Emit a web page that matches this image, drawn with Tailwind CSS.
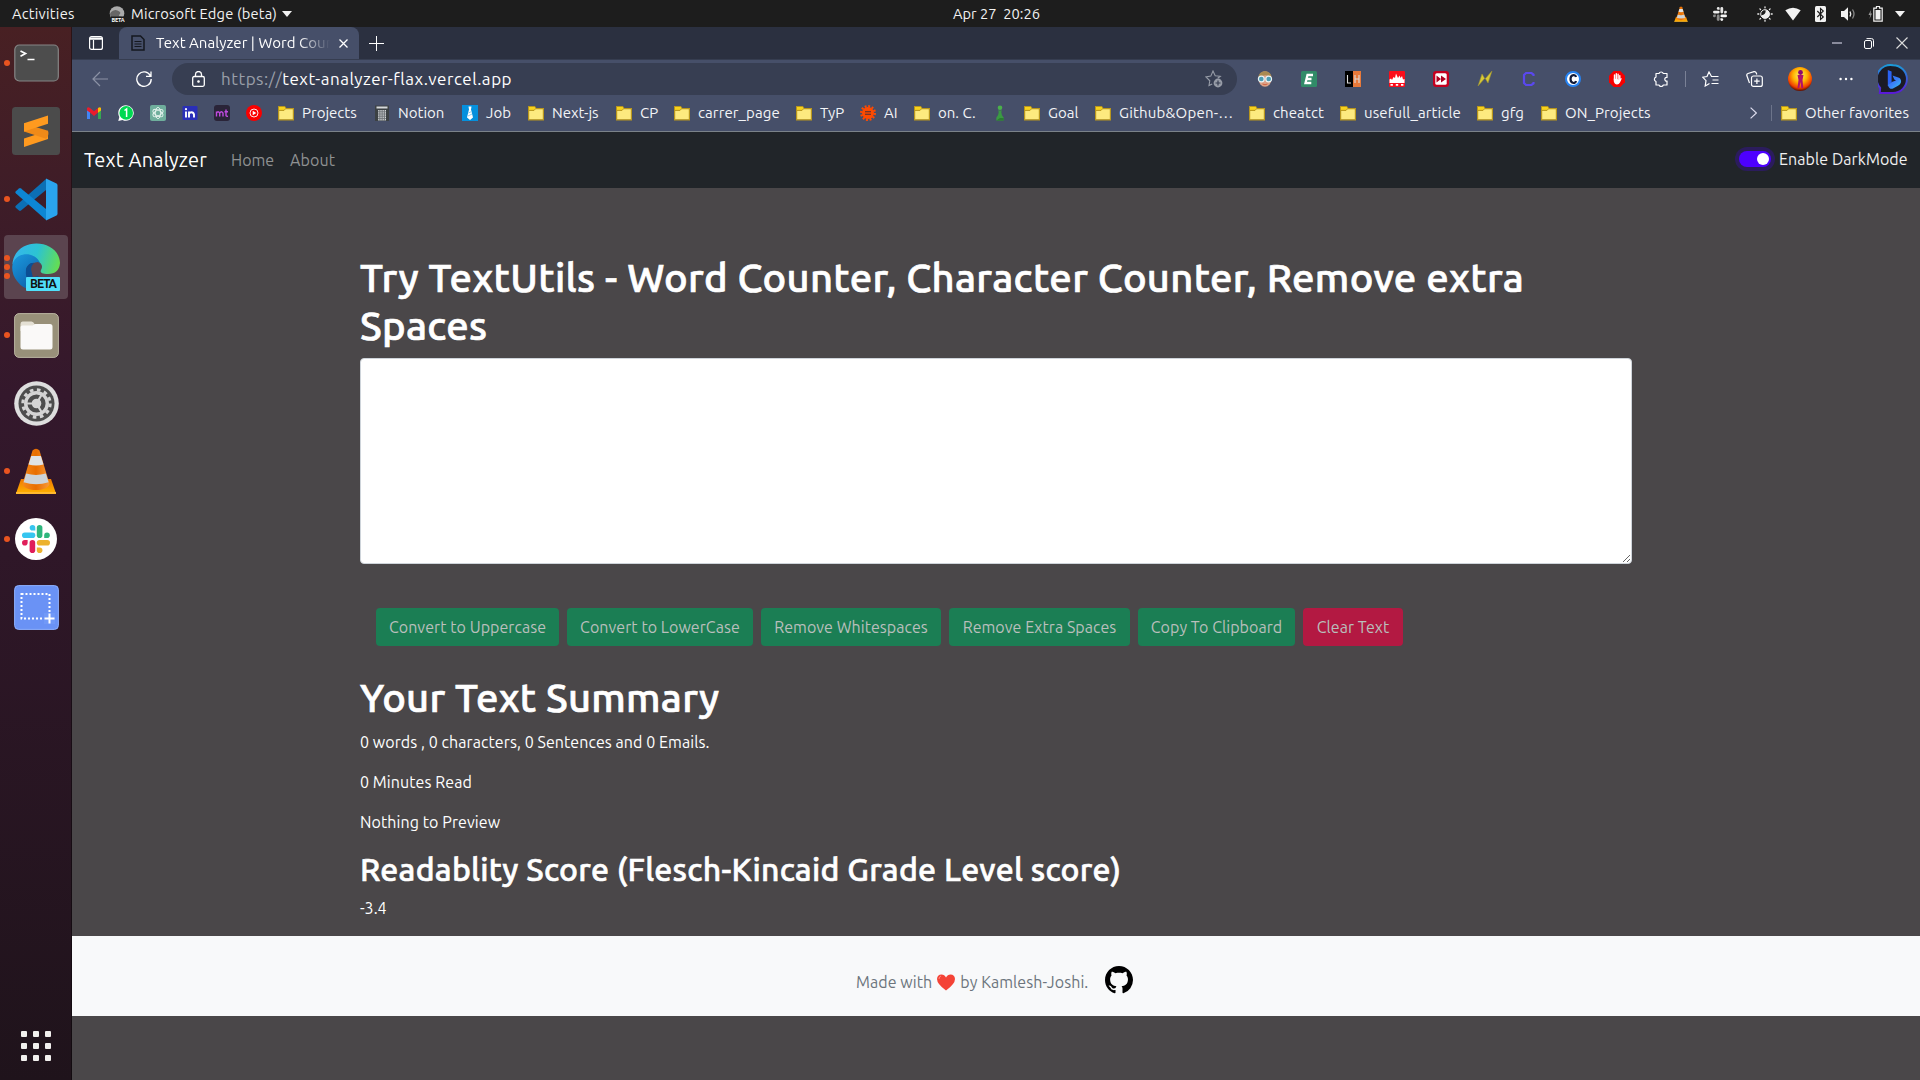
<!DOCTYPE html>
<html lang="en">
<head>
<meta charset="utf-8">
<title>Text Analyzer | Word Counter</title>
<script src="https://cdn.jsdelivr.net/npm/@tailwindcss/browser@4"></script>
</head>
<body class="w-[1920px] h-[1080px] overflow-hidden flex flex-col bg-[#4a4749] font-[Ubuntu,'Noto_Sans',sans-serif] text-white">

<!-- shared symbols -->
<svg class="absolute size-0">
  <defs>
    <linearGradient id="edgeTop" x1="0" y1="0.3" x2="1" y2="0.5"><stop offset="0" stop-color="#36b5ee"/><stop offset=".5" stop-color="#2cc3d2"/><stop offset="1" stop-color="#63dd55"/></linearGradient>
    <linearGradient id="edgeLow" x1="0" y1="0" x2=".8" y2="1"><stop offset="0" stop-color="#1b9ade"/><stop offset="1" stop-color="#0c59a4"/></linearGradient>
    <linearGradient id="cone" x1="0" y1="0" x2="1" y2="0"><stop offset="0" stop-color="#f58a1c"/><stop offset=".5" stop-color="#e86e00"/><stop offset="1" stop-color="#f79a3a"/></linearGradient>
    <linearGradient id="base" x1="0" y1="0" x2="0" y2="1"><stop offset="0" stop-color="#f07800"/><stop offset="1" stop-color="#ffb300"/></linearGradient>
    <linearGradient id="bingRing" x1="0" y1="0" x2="0" y2="1"><stop offset="0" stop-color="#1a9bd8"/><stop offset="1" stop-color="#5a18d8"/></linearGradient>
    <linearGradient id="bingB" x1="0" y1="0" x2="1" y2="1"><stop offset="0" stop-color="#2a6bf5"/><stop offset=".5" stop-color="#3a7ef8"/><stop offset="1" stop-color="#38c8f0"/></linearGradient>
    <radialGradient id="sun" cx=".5" cy=".35" r=".65"><stop offset="0" stop-color="#fff36a"/><stop offset=".45" stop-color="#ffb400"/><stop offset=".8" stop-color="#f04000"/><stop offset="1" stop-color="#5a0d00"/></radialGradient>
  </defs>
  <symbol id="folder" viewBox="0 0 16 16"><path d="M.6 1.6h6l1.4 2h7.4v11.2H.6z" fill="#fdea7f" stroke="#b8961e" stroke-width="1.2"/><path d="M1 2h5.4l1 1.6-1.2 1.8H1z" fill="#f7d21c"/><path d="M1 5.4h5L7.6 3.8" fill="none" stroke="#b8961e"/></symbol>
  <symbol id="vlc" viewBox="0 0 42 46"><path d="M6 31h30l5 14.5H1z" fill="url(#base)"/><path d="M1 44h40v2H1z" fill="#ffb92e"/><path d="M7.500 36C10 44 32 44 34.500 36L24.500 2.500Q21-1 17.500 2.500z" fill="url(#cone)"/><path d="M16.200 8h9.700l2.600 8.500q-7.500 2-15 0z" fill="#dfe3e6"/><path d="M11.200 25.500q9.800 2.800 19.600 0l2.800 8.700q-12.500 4-25 0z" fill="#cdd3d7"/></symbol>
  <symbol id="slack" viewBox="0 0 28 28"><g fill="#36c5f0"><path d="M10.500 0a2.800 2.800 0 0 1 2.800 2.800v2.800h-2.800a2.800 2.800 0 0 1 0-5.600z"/><rect x="0" y="7.400" width="13.300" height="5.600" rx="2.800"/></g><g fill="#2eb67d"><rect x="14.800" y="0" width="5.600" height="13" rx="2.800"/><path d="M22.200 13V10.200a2.800 2.800 0 1 1 2.800 2.800z"/></g><g fill="#ecb22e"><rect x="14.800" y="15" width="13.200" height="5.600" rx="2.800"/><path d="M14.800 22.400h2.800a2.800 2.800 0 1 1-2.800 2.800z"/></g><g fill="#e01e5a"><rect x="7.600" y="15" width="5.600" height="13" rx="2.800"/><path d="M5.600 15v2.800A2.800 2.800 0 1 1 2.800 15z"/></g></symbol>
</svg>

<!-- system top bar -->
<header class="h-[27px] shrink-0 bg-[#1d1d1d] text-[14.67px] leading-[27px] text-[#f2f2f2] grid grid-cols-[1fr_auto_1fr] items-center">
  <div class="flex items-center pl-3">
    <span class="w-[97px] tracking-[.25px]">Activities</span>
    <svg class="w-4 h-4 mr-[6px]" viewBox="0 0 16 16"><circle cx="8" cy="7.500" r="7.300" fill="#aaa"/><path d="M1 8a6 6 0 0 1 10-2c1 2-1 2-1 4l4 1V16H3z" fill="#666"/><rect x="2" y="10.500" width="14" height="5.500" fill="#1d1d1d"/><text x="2.500" y="15.600" font-size="5.500" font-weight="700" fill="#fff" textLength="13">BETA</text></svg>
    <span class="w-[151px] tracking-[.17px]">Microsoft Edge (beta)</span>
    <svg class="w-[10px] h-[6px]" viewBox="0 0 10 6"><path d="M0 0h10L5 6z" fill="#f2f2f2"/></svg>
  </div>
  <div class="w-[88px] mr-[-74px] whitespace-pre">Apr 27  20:26</div>
  <div class="flex items-center justify-end pr-[15px]">
    <svg class="w-[14px] h-4 mr-[25px]"><use href="#vlc"/></svg>
    <svg class="w-[14px] h-[14px] mr-[30px] grayscale brightness-[3]"><use href="#slack"/></svg>
    <svg class="w-4 h-4 mr-[12px]" viewBox="0 0 16 16"><g stroke="#eee" stroke-width="1.300" stroke-linecap="round"><path d="M8 .8v1M8 14.200v1M.8 8h1M14.200 8h1M2.900 2.900l.7.7M12.400 12.400l.7.7M2.900 13.100l.7-.7M12.400 3.600l.7-.7"/></g><circle cx="8" cy="8" r="4.300" fill="none" stroke="#eee"/><path d="M8.500 4a4.300 4.300 0 1 1-4.300 5.200A4 4 0 0 0 8.500 4z" fill="#eee"/></svg>
    <svg class="w-4 h-4 mr-[14px]" viewBox="0 0 16 16"><path d="M.3 4.300Q8-1 15.700 4.300L8 14.500z" fill="#f2f2f2"/></svg>
    <svg class="w-[11px] h-4 mr-[15px]" viewBox="0 0 11 16"><rect width="11" height="16" rx="1.500" fill="#f2f2f2"/><path d="M2.300 5l6 6-2.800 2.500v-11L8.300 5l-6 6" fill="none" stroke="#1d1d1d" stroke-width="1.100"/></svg>
    <svg class="w-[15px] h-4 mr-[12px]" viewBox="0 0 15 16"><path d="M0 5h3l4-3.800v13.600L3 11H0z" fill="#f2f2f2"/><path d="M9 5.500q1.500 2.500 0 5" stroke="#eee" stroke-width="1.400" fill="none"/><path d="M11.500 3.500q3 4.500 0 9" stroke="#888" stroke-width="1.300" fill="none"/></svg>
    <svg class="w-[15px] h-4 mr-[12px]" viewBox="0 0 15 16"><path d="M3 4L.5 9h1.800L1.500 13 4 7.500H2.500z" fill="#999"/><path d="M8.500.5h3v1.700h2.700v13H5.800v-13h2.700z" fill="none" stroke="#f2f2f2" stroke-width="1.200"/><rect x="7.500" y="4" width="5" height="9.500" fill="#f2f2f2"/></svg>
    <svg class="w-[10px] h-[6px]" viewBox="0 0 10 6"><path d="M0 0h10L5 6z" fill="#f2f2f2"/></svg>
  </div>
</header>

<div class="flex flex-1 min-h-0">
  <!-- dock -->
  <aside class="w-[72px] shrink-0 bg-linear-to-b from-[#482023] via-[#34182c] via-35% to-[#1f131b] flex flex-col items-center gap-1 pt-1 shadow-[inset_-1px_0_0_rgba(0,0,0,0.4)]">
    <div class="relative w-16 h-16 grid place-items-center">
      <i class="absolute left-0 top-[29px] size-[6px] rounded-full bg-[#e95420]"></i>
      <svg class="w-[45px] h-[38px]" viewBox="0 0 45 38"><rect x=".8" y="1" width="43.500" height="36" rx="4.500" fill="#4d4d4d" stroke="#858585" stroke-width="1.200"/><path d="M6.500 7l5 2.600-5 2.600M13.500 15.500h7" fill="none" stroke="#fff" stroke-width="1.700"/></svg>
    </div>
    <div class="w-16 h-16 grid place-items-center">
      <svg class="size-12" viewBox="0 0 48 48"><rect width="48" height="48" rx="3.500" fill="#4b4b4b"/><path d="M12 31.500l24-7.700v8.200L12 40z" fill="#ff9a1f"/><path d="M12 16.500l24 7.300q1.500 5-2 8L12 24.500z" fill="#f08a18"/><path d="M12 16.200L36 8.500v8.200L12 24.600z" fill="#ff9a1f"/></svg>
    </div>
    <div class="relative w-16 h-16 grid place-items-center">
      <i class="absolute left-0 top-[29px] size-[6px] rounded-full bg-[#e95420]"></i>
      <svg class="w-[43px] h-[43px]" viewBox="0 0 43 43"><path d="M31 1v11L6 32.500q-1 .8-2 0L.8 29.800q-1-1 0-2z" fill="#0c6fb5"/><path d="M31 42V31L6 10.500q-1-.8-2 0L.8 13.200q-1 1 0 2z" fill="#0d86d4"/><path d="M31 .5l10.500 5q1 .6 1 2v28q0 1.400-1 2l-10.500 5z" fill="#2aa4ee"/></svg>
    </div>
    <div class="relative w-16 h-16 grid place-items-center rounded bg-[#5b444f]">
      <i class="absolute left-0 top-[20px] size-[6px] rounded-full bg-[#e95420]"></i>
      <i class="absolute left-0 top-[29px] size-[6px] rounded-full bg-[#e95420]"></i>
      <i class="absolute left-0 top-[38px] size-[6px] rounded-full bg-[#e95420]"></i>
      <svg class="size-12" viewBox="0 0 48 48"><path d="M.4 21C3-7 47-5 48 20q-1 11-12 11c-7 0-8-2-7-4 3-5-1-9-7-9Q8 15 .4 21z" fill="url(#edgeTop)"/><path d="M.2 24C1 10 20 7 27 18q2 3 1 6c-2-5-9-6-13 0-4 9 4 18 18 19Q15 52 5 38 0 32 .2 24z" fill="url(#edgeLow)"/><path d="M14 26c3-8 9-7 13-3-5 0-5 8 1 12l3 10Q12 44 14 26z" fill="#0b4f94"/><path d="M19 26q1-7 7-7 4 2 3 6-2 4 0 6l-8 4z" fill="#5b444f"/><rect x="14" y="34" width="34" height="14" rx="1" fill="#50e0fb"/><text x="18" y="45.200" font-size="12" font-weight="700" textLength="27" fill="#111">BETA</text></svg>
    </div>
    <div class="relative w-16 h-16 grid place-items-center">
      <i class="absolute left-0 top-[29px] size-[6px] rounded-full bg-[#e95420]"></i>
      <svg class="size-[45px]" viewBox="0 0 45 45"><rect x=".6" y=".6" width="43.800" height="43.800" rx="4.500" fill="#989079" stroke="#b9b3a0"/><path d="M6.500 11q0-2.500 2-2.500h9q2 0 3 2.500h14L33 18H6.500z" fill="#e4e0d4"/><path d="M6.500 14q0-1.500 2-1.500h10l3-1.500h14.500q2.500 0 2.500 2.500V34q0 2.500-2.500 2.500H9q-2.500 0-2.500-2.500z" fill="#faf9f8"/></svg>
    </div>
    <div class="w-16 h-16 grid place-items-center">
      <svg class="size-[45px]" viewBox="0 0 45 45"><circle cx="22.500" cy="22.500" r="22.300" fill="#dedede"/><circle cx="22.500" cy="22.500" r="18" fill="#4d4d4d"/><circle cx="22.500" cy="22.500" r="13.700" fill="none" stroke="#d4d4d4" stroke-width="3" stroke-dasharray="3.600 3.573"/><circle cx="22.500" cy="22.500" r="10.800" fill="none" stroke="#d4d4d4" stroke-width="3.400"/><circle cx="22.500" cy="22.500" r="4.800" fill="#d4d4d4"/><path d="M22.500 22.500L13 22.500M22.500 22.500l5-8.500M22.500 22.500l5 8.500" stroke="#d4d4d4" stroke-width="2.200"/></svg>
    </div>
    <div class="relative w-16 h-16 grid place-items-center">
      <i class="absolute left-0 top-[29px] size-[6px] rounded-full bg-[#e95420]"></i>
      <svg class="w-[42px] h-[46px]"><use href="#vlc"/></svg>
    </div>
    <div class="relative w-16 h-16 grid place-items-center">
      <i class="absolute left-0 top-[29px] size-[6px] rounded-full bg-[#e95420]"></i>
      <span class="size-[42px] rounded-full bg-white grid place-items-center"><svg class="size-7"><use href="#slack"/></svg></span>
    </div>
    <div class="w-16 h-16 grid place-items-center">
      <svg class="size-[45px]" viewBox="0 0 45 45"><rect x=".6" y=".6" width="43.800" height="43.800" rx="4" fill="#6a92f5" stroke="#8db0ff"/><rect x="7.500" y="9" width="28" height="24.500" fill="none" stroke="#fff" stroke-width="2" stroke-dasharray="2 2"/><rect x="30" y="28" width="11" height="11" fill="#7199f7"/><path d="M35.500 28.500v10M30.500 33.500h10" stroke="#fff" stroke-width="2"/></svg>
    </div>
    <svg class="size-[30px] mt-auto mb-[19px]" viewBox="0 0 30 30" fill="#f2f0ee"><rect width="6" height="6" rx="1"/><rect x="12" width="6" height="6" rx="1"/><rect x="24" width="6" height="6" rx="1"/><rect y="12" width="6" height="6" rx="1"/><rect x="12" y="12" width="6" height="6" rx="1"/><rect x="24" y="12" width="6" height="6" rx="1"/><rect y="24" width="6" height="6" rx="1"/><rect x="12" y="24" width="6" height="6" rx="1"/><rect x="24" y="24" width="6" height="6" rx="1"/></svg>
  </aside>

  <div class="flex-1 min-w-0 flex flex-col">
    <!-- tab strip -->
    <div class="h-8 shrink-0 bg-[#2b3040] flex items-center">
      <svg class="w-[14px] h-[14px] ml-[17px] mr-4" viewBox="0 0 14 14" fill="none" stroke="#fff" stroke-width="1.200"><rect x=".6" y=".6" width="12.800" height="12.800" rx="2"/><path d="M1 2h12M1 3.200h12M4.500 4v9"/></svg>
      <div class="w-60 h-8 rounded-t-lg bg-[#464f69] flex items-center pl-3">
        <svg class="w-[14px] h-4 mr-[11px]" viewBox="0 0 14 16" fill="none" stroke="#15181f" stroke-width="1.500"><path d="M1 1h8.500L13 4.500V15H1z"/><path d="M3.500 6.500h7M3.500 9h7M3.500 11.500h7" stroke-width="1.100"/></svg>
        <span class="w-[174px] overflow-hidden whitespace-nowrap text-[15px] leading-8 tracking-[.05px] mask-r-from-82% mask-r-to-100%">Text Analyzer | Word Counter</span>
        <svg class="w-[9px] h-[9px] ml-[9px]" viewBox="0 0 9 9" stroke="#fff" stroke-width="1.300"><path d="M.5.500l8 8M8.500.5l-8 8"/></svg>
      </div>
      <svg class="size-[15px] ml-[10px]" viewBox="0 0 15 15" stroke="#fff" stroke-width="1"><path d="M7.500 0v15M0 7.500h15"/></svg>
      <div class="ml-auto flex items-center pr-3">
        <svg class="w-[10px] h-3 mr-[22px]" viewBox="0 0 10 12"><path d="M0 6h10" stroke="#aab" stroke-width="1.500"/></svg>
        <svg class="w-[10px] h-[11px] mr-[22px]" viewBox="0 0 10 11" fill="none" stroke="#fff"><rect x=".5" y="2.500" width="7" height="8" rx="1.500"/><path d="M2.500.6h5q2 0 2 2v6"/></svg>
        <svg class="size-3" viewBox="0 0 12 12" stroke="#ddd" stroke-width="1.100"><path d="M.5.500l11 11M11.500.5l-11 11"/></svg>
      </div>
    </div>

    <!-- address bar -->
    <div class="h-10 shrink-0 bg-[#464f69] shadow-[inset_0_1px_0_#363d50] flex items-center pl-5 pr-3">
      <svg class="w-4 h-4 mr-7 shrink-0" viewBox="0 0 16 16" fill="none" stroke="#8b92a5" stroke-width="1.200"><path d="M16 8H1M8 1L1 8l7 7"/></svg>
      <svg class="w-4 h-4 mr-5 shrink-0" viewBox="0 0 16 16" fill="none" stroke="#fff" stroke-width="1.300"><path d="M14.500 5A7.200 7.200 0 1 0 15.200 8M15 .5V5.300H10"/></svg>
      <div class="w-[1065px] shrink-0 h-8 rounded-full bg-[#373e52] flex items-center pl-5 pr-[14px]">
        <svg class="w-[13px] h-4 mr-4" viewBox="0 0 13 16" fill="none" stroke="#fff" stroke-width="1.300"><rect x=".7" y="5.500" width="11.600" height="9.800" rx="1.500"/><path d="M3.500 5.500V3.500a3 3 0 0 1 6 0v2"/><circle cx="6.500" cy="10.500" r=".7" fill="#fff"/></svg>
        <span class="text-[17px] tracking-[.52px] leading-8"><span class="text-[#9a9fa9]">https://</span>text-analyzer-flax.vercel.app</span>
        <svg class="w-[18px] h-[18px] ml-auto" viewBox="0 0 18 18"><path d="M12.700 8.300l2.600-2-5.100-.6L8 1 5.800 6.100 1 6.900l3.800 3.900-.8 4.700 3.200-1.600" fill="none" stroke="#979ca7" stroke-width="1.100"/><circle cx="13" cy="13" r="4.400" fill="#979ca7"/><path d="M13 10.500v5M10.500 13h5" stroke="#373e52" stroke-width="1.200"/></svg>
      </div>
      <!-- extensions -->
      <div class="ml-5 flex shrink-0 items-center gap-7">
        <svg class="size-4" viewBox="0 0 16 16"><ellipse cx="8" cy="8" rx="6.500" ry="7.700" fill="#dba389"/><path d="M1.500 7C1 -2 15 -2 14.500 7 11 3 5 4 1.500 7z" fill="#a88a52"/><circle cx="4.300" cy="8" r="2.900" fill="#4a9cb3" stroke="#e8f2f5" stroke-width="1.200"/><circle cx="11.700" cy="8" r="2.900" fill="#4a9cb3" stroke="#e8f2f5" stroke-width="1.200"/><path d="M5.500 13q2.500 1.500 5 0" stroke="#d0603e" fill="none"/></svg>
        <svg class="size-4" viewBox="0 0 16 16"><rect width="16" height="16" rx="1.500" fill="#318b68"/><path d="M12 4H6.500L4.500 12h5.800M5.500 8h5" fill="none" stroke="#fff" stroke-width="2.300"/></svg>
        <svg class="size-4" viewBox="0 0 16 16"><rect width="9" height="16" fill="#000"/><rect x="8" width="8" height="16" fill="#e8793a"/><path d="M2.500 4v8h3.500M10 4v8M14 4v8M10 8h4" fill="none" stroke="#ddd" stroke-width="1.100"/></svg>
        <svg class="size-4" viewBox="0 0 16 16"><rect width="16" height="16" rx="1" fill="#fb0d1b"/><path d="M.5 11V8.500L2 7.500l1 1.500 1.500-3L6 7l1-4.500L9 7l1.500-2.500 1 2.500L13 5l1 3.500 1.500-.5v3z" fill="#fff"/><path d="M.5 11v1h15v-1z" fill="#fff"/><path d="M1.500 13.800h2.400M6.800 13.800h2.400M12 13.800h2.400" stroke="#fff" stroke-width="1.700"/></svg>
        <svg class="size-4" viewBox="0 0 16 16"><rect width="16" height="16" rx="3" fill="#c4001f"/><rect x="2.300" y="2.300" width="11.400" height="11.400" rx="1.500" fill="#fff"/><path d="M3.500 4.500L8 8l-4.500 3.500zM8 4.500L13 8l-5 3.500z" fill="#b00020"/></svg>
        <svg class="size-4" viewBox="0 0 16 16"><path d="M1 15L5 3l3 5 7-8-4 12-3-5z" fill="#d9c934" stroke="#9b9136" stroke-width=".6"/></svg>
        <svg class="size-4" viewBox="0 0 16 16"><path d="M12.500 5V3.500L10.500 2H5L3 4v8l2 2h5.500l2-1.500V11" fill="none" stroke="#5a48ee" stroke-width="2.200"/></svg>
        <svg class="size-4" viewBox="0 0 16 16"><circle cx="8" cy="8" r="7" fill="#fff" stroke="#2684f5" stroke-width="2"/><path d="M11 6Q10.500 4 8.500 4 5.500 4.500 5.500 8t3 4Q10.500 12 11 10" fill="none" stroke="#111a38" stroke-width="2.200"/></svg>
        <svg class="size-4" viewBox="0 0 16 16"><path d="M4.700 0h6.600L16 4.700v6.600L11.300 16H4.700L0 11.300V4.700z" fill="#f70000"/><path d="M5.500 9V4M7.300 8V2.800M9.100 8V3.200M10.800 9V4.600" stroke="#fff" stroke-width="1.400" stroke-linecap="round"/><path d="M4.800 7.500v3q.8 3 3.200 3 2 0 3-2l1.800-4-1-.4-1 1.400z" fill="#fff"/></svg>
        <svg class="size-4" viewBox="0 0 16 16"><path d="M3 2.500h3a2.300 2.300 0 0 1 4.300 0H14v4a1.800 1.800 0 1 0 0 3.500v4h-3.700a2.300 2.300 0 0 1-4.300 0H3V10.500a2.300 2.300 0 0 1 0-4.400z" fill="none" stroke="#fff" stroke-width="1.200" stroke-linejoin="round"/></svg>
      </div>
      <span class="w-px h-4 bg-[#7a8196] ml-4 mr-4 shrink-0"></span>
      <svg class="w-[17px] h-4 shrink-0" viewBox="0 0 17 16" fill="none" stroke="#fff" stroke-width="1.200"><path d="M9 5.500H14M16.500 5.500H9.500L7 1 5 5.500.7 6.200 4 9.600 3.200 15 7.500 12.500M10.500 9h6M9.500 12.500h7"/></svg>
      <svg class="w-[17px] h-4 ml-[27px] shrink-0" viewBox="0 0 17 16" fill="none" stroke="#fff" stroke-width="1.200"><rect x="5.500" y="5" width="10.800" height="10.400" rx="2"/><path d="M10.900 7.500v5.500M8.200 10.200h5.500M3.500 12L.8 4.500Q.5 3 2 2.500L8 .7q1.700-.3 2.300 1.300l.5 1.500"/></svg>
      <svg class="size-6 ml-[25px] shrink-0" viewBox="0 0 24 24"><circle cx="12" cy="12" r="12" fill="url(#sun)"/><circle cx="12.500" cy="5.500" r="2.400" fill="#8a0a70"/><path d="M9.500 8h6l-1 5 .8 8h-2l-.8-6-1.200 6H9.500l1-8z" fill="#b0126a"/></svg>
      <svg class="w-[14px] h-1 ml-[27px] shrink-0" viewBox="0 0 14 4" fill="#fff"><circle cx="1.600" cy="2" r="1.200"/><circle cx="7" cy="2" r="1.200"/><circle cx="12.400" cy="2" r="1.200"/></svg>
      <svg class="w-[30px] h-[31px] ml-auto shrink-0" viewBox="0 0 30 31"><path d="M15 1.200A13.800 13.800 0 1 1 15 29H1.800l.4-5A13.800 13.800 0 0 1 15 1.200z" fill="#1b1b25" stroke="url(#bingRing)" stroke-width="1.900"/><path d="M9.800 6l3.800 1.500v10.500l-3.800 4z" fill="#2a62f2"/><path d="M9.800 21l4-3 4.200-1.500-1.700-.9-1.800-4.200 6.500 2.300q2.500 1.500 2 4.500-.5 2-3 3.600l-5 2.800q-3.500 1.300-5.200-3.600z" fill="url(#bingB)"/></svg>
    </div>

    <!-- favourites bar -->
    <div class="h-[33px] shrink-0 bg-[#464f69] border-b border-[#7b8289] flex items-center pl-[14px] pr-[11px] pb-1 text-[15px] leading-7 text-[#f3f4f7] whitespace-nowrap">
      <div class="flex items-center gap-4 mr-4">
        <svg class="size-4" viewBox="0 0 16 16"><path d="M1 3.500V14h3V7z" fill="#4285f4"/><path d="M12 7v7h3V3.500z" fill="#34a853"/><path d="M1 3q1-1.500 3 0l4 3.200L12 3v4.500L8 11 4 7.500 1 5.500z" fill="#ea1c2c"/><path d="M12 3q2-1.500 3 0v2.500l-3 2.300z" fill="#fbbc04"/></svg>
        <svg class="size-4" viewBox="0 0 16 16"><path d="M8 .2A7.800 7.800 0 1 1 4.500 15L.3 15.900l1-4A7.800 7.800 0 0 1 8 .2z" fill="#fff"/><circle cx="8.200" cy="7.900" r="6.800" fill="#00d951"/><path d="M6.500 5.500L8.600 4v8" fill="none" stroke="#fff" stroke-width="1.500"/></svg>
        <svg class="size-4" viewBox="0 0 16 16"><rect width="16" height="16" rx="2" fill="#6fae9c"/><g fill="none" stroke="#e8f5f0" stroke-width=".9"><ellipse cx="8" cy="8" rx="2.700" ry="5.600"/><ellipse cx="8" cy="8" rx="2.700" ry="5.600" transform="rotate(60 8 8)"/><ellipse cx="8" cy="8" rx="2.700" ry="5.600" transform="rotate(120 8 8)"/></g></svg>
        <svg class="size-4" viewBox="0 0 16 16"><rect x=".5" y="1" width="15" height="14" rx="1" fill="#2a2fb8"/><path d="M4 6.500v6M7 6.500v6M7 9q.5-1.800 2.500-1.800T12 9.500v3" fill="none" stroke="#fff" stroke-width="1.900"/><circle cx="4" cy="4.200" r="1.100" fill="#fff"/></svg>
        <svg class="size-4" viewBox="0 0 16 16"><rect width="16" height="16" rx="3" fill="#2a2438"/><path d="M2.500 11.500V6.500M2.500 8Q4 5.500 5.700 8v3.500M5.700 8Q7.500 5.500 9 8v3.500M12 4.500v6q.3 1 2 .8M10.500 6.800h3.500" fill="none" stroke="#c04be0" stroke-width="1.400"/></svg>
        <svg class="size-4" viewBox="0 0 16 16"><circle cx="8" cy="8" r="8" fill="#f90000"/><circle cx="8" cy="8" r="4" fill="none" stroke="#fff" stroke-width=".9"/><path d="M6.700 5.800v4.400L10.300 8z" fill="#fff"/></svg>
      </div>
      <span class="w-24 shrink-0 flex items-center gap-2"><svg class="size-4"><use href="#folder"/></svg>Projects</span>
      <span class="w-[88px] shrink-0 flex items-center gap-2"><svg class="size-4" viewBox="0 0 16 16"><path d="M1 .5h14v15.500H1z" fill="#3c4144"/><path d="M2.500 1.500h11v2h-11z" fill="#d5d8da"/><path d="M4 5h8v11H4z" fill="#6d7276"/><path d="M4.800 5v11M7 5v11M9.200 5v11M11.400 5v11" stroke="#dfe2e4" stroke-width="1" stroke-dasharray="1.400 .8"/></svg>Notion</span>
      <span class="w-[66px] shrink-0 flex items-center gap-2"><svg class="size-4" viewBox="0 0 16 16"><rect width="16" height="16" fill="#0590dd"/><path d="M6.500 1.500h3L9 4.500l2 8-3 2.500-3-2.500 2-8z" fill="#fff"/><path d="M6.500 8l3-1.500M6 11l4-2" stroke="#8ccdf0"/></svg>Job</span>
      <span class="w-[88px] shrink-0 flex items-center gap-2"><svg class="size-4"><use href="#folder"/></svg>Next-js</span>
      <span class="w-[58px] shrink-0 flex items-center gap-2"><svg class="size-4"><use href="#folder"/></svg>CP</span>
      <span class="w-[122px] shrink-0 flex items-center gap-2 tracking-[.1px]"><svg class="size-4"><use href="#folder"/></svg>carrer_page</span>
      <span class="w-16 shrink-0 flex items-center gap-2"><svg class="size-4"><use href="#folder"/></svg>TyP</span>
      <span class="w-[54px] shrink-0 flex items-center gap-2"><svg class="size-4" viewBox="0 0 16 16"><circle cx="8" cy="8" r="6" fill="#ff4a00"/><circle cx="8" cy="8" r="6.800" fill="none" stroke="#ff4a00" stroke-width="2.400" stroke-dasharray="1.900 1.660"/><path d="M5 6.800h6M5 9.300h6" stroke="#4a3038" stroke-width="1.100"/></svg>AI</span>
      <span class="w-[78px] shrink-0 flex items-center gap-2"><svg class="size-4"><use href="#folder"/></svg>on. C.</span>
      <svg class="size-4 shrink-0 mr-4" viewBox="0 0 16 16"><circle cx="8" cy="2.800" r="2.300" fill="#4bb14b"/><path d="M5.800 5.400h4.400L9.200 6.800q.2 3.700 2.500 6v2.700H4.300v-2.700q2.300-2.300 2.500-6z" fill="#3a9a42"/><path d="M8 13h3.700v2.500H4.300z" fill="#2b7a33"/></svg>
      <span class="w-[71px] shrink-0 flex items-center gap-2"><svg class="size-4"><use href="#folder"/></svg>Goal</span>
      <span class="w-[154px] shrink-0 flex items-center gap-2 tracking-[.2px]"><svg class="size-4"><use href="#folder"/></svg>Github&amp;Open-…</span>
      <span class="w-[91px] shrink-0 flex items-center gap-2 tracking-[.1px]"><svg class="size-4"><use href="#folder"/></svg>cheatct</span>
      <span class="w-[137px] shrink-0 flex items-center gap-2 tracking-[.13px]"><svg class="size-4"><use href="#folder"/></svg>usefull_article</span>
      <span class="w-16 shrink-0 flex items-center gap-2"><svg class="size-4"><use href="#folder"/></svg>gfg</span>
      <span class="flex items-center gap-2 tracking-[.1px]"><svg class="size-4"><use href="#folder"/></svg>ON_Projects</span>
      <svg class="w-[7px] h-3 ml-auto mr-[14px]" viewBox="0 0 7 12" fill="none" stroke="#dde" stroke-width="1.200"><path d="M.6.600L6.400 6 .6 11.400"/></svg>
      <span class="w-px h-4 bg-[#6c748a] mr-[9px]"></span>
      <span class="flex items-center gap-2 tracking-[.07px]"><svg class="size-4"><use href="#folder"/></svg>Other favorites</span>
    </div>

    <!-- web page -->
    <nav class="h-14 shrink-0 bg-[#212529] flex items-center px-3 text-base">
      <a class="text-xl tracking-[.15px] w-[147px]">Text Analyzer</a>
      <a class="text-[#8f9192] w-[59px]">Home</a>
      <a class="text-[#8f9192] tracking-[.1px]">About</a>
      <div class="ml-auto flex items-center gap-2 pb-[2px]">
        <span class="w-8 h-4 rounded-full bg-[#4d00ff] shadow-[0_0_0_4px_#2b1c5c] flex items-center justify-end pr-[2px]"><i class="size-3 rounded-full bg-white"></i></span>
        <span class="text-[#f0f0f0] w-[129px] tracking-[.08px]">Enable DarkMode</span>
      </div>
    </nav>

    <main class="w-[1272px] ml-72 pt-[66px] shrink-0 text-base">
      <h1 class="text-[40px] leading-[48px] font-medium tracking-[.31px] [-webkit-text-stroke:0.7px_white]">Try TextUtils - Word Counter, Character Counter, Remove extra<br>Spaces</h1>
      <textarea class="block mt-2 w-full h-[206px] bg-white border border-[#ced4da] rounded resize"></textarea>
      <div class="flex gap-2 mt-11 ml-4 text-[#b9bfbc] tracking-[.05px]">
        <button class="h-[38px] w-[183px] rounded bg-[#1b7e54]">Convert to Uppercase</button>
        <button class="h-[38px] w-[186px] rounded bg-[#1b7e54]">Convert to LowerCase</button>
        <button class="h-[38px] w-[180px] rounded bg-[#1b7e54]">Remove Whitespaces</button>
        <button class="h-[38px] w-[181px] rounded bg-[#1b7e54]">Remove Extra Spaces</button>
        <button class="h-[38px] w-[157px] rounded bg-[#1b7e54]">Copy To Clipboard</button>
        <button class="h-[38px] w-[100px] rounded bg-[#b31942]">Clear Text</button>
      </div>
      <h1 class="mt-7 text-[40px] leading-[48px] font-medium tracking-[.25px] [-webkit-text-stroke:0.7px_white]">Your Text Summary</h1>
      <p class="mt-2 leading-6 tracking-[.07px]">0 words , 0 characters, 0 Sentences and 0 Emails.</p>
      <p class="mt-4 leading-6 tracking-[.08px]">0 Minutes Read</p>
      <p class="mt-4 leading-6 tracking-[.08px]">Nothing to Preview</p>
      <h2 class="mt-4 text-[32px] leading-[38px] font-medium tracking-[.24px] [-webkit-text-stroke:0.6px_white]">Readablity Score (Flesch-Kincaid Grade Level score)</h2>
      <p class="mt-2 leading-6">-3.4</p>
    </main>

    <footer class="mt-4 h-20 shrink-0 bg-[#f8f9fa] text-[#6c757d] flex items-center pl-[784px] pt-[8px]">
      <span class="w-[249px] pt-1 flex items-center tracking-[.06px]">Made with
        <svg class="w-[18px] h-[17px] mx-[5px]" viewBox="0 0 18 17"><path d="M9 16.500Q0 10 0 5 .3.600 4.500.5 7.500.5 9 3.500 10.500.5 13.500.5 17.700.6 18 5q0 5-9 11.500z" fill="#f44336"/><path d="M2 5q0-2.500 2-3" stroke="#ff8a80" fill="none"/></svg>
        by Kamlesh-Joshi.</span>
      <svg class="size-7" viewBox="0 0 16 16" fill="#000"><path d="M8 0C3.580 0 0 3.580 0 8c0 3.540 2.290 6.530 5.470 7.590.4.070.55-.17.55-.38 0-.19-.01-.82-.01-1.490-2.010.37-2.530-.49-2.690-.94-.09-.23-.48-.94-.82-1.130-.28-.15-.68-.52-.01-.53.63-.01 1.080.58 1.230.82.72 1.210 1.870.87 2.330.66.07-.52.28-.87.51-1.070-1.780-.2-3.640-.89-3.640-3.950 0-.87.31-1.590.82-2.150-.08-.2-.36-1.020.08-2.120 0 0 .67-.21 2.200.82.64-.18 1.320-.27 2-.27s1.360.09 2 .27c1.530-1.040 2.200-.82 2.200-.82.44 1.100.16 1.920.08 2.120.51.56.82 1.270.82 2.150 0 3.070-1.870 3.750-3.650 3.950.29.25.54.73.54 1.480 0 1.070-.01 1.930-.01 2.200 0 .21.150.46.550.38A8.010 8.010 0 0 0 16 8c0-4.420-3.580-8-8-8z"/></svg>
    </footer>
  </div>
</div>
</body>
</html>
